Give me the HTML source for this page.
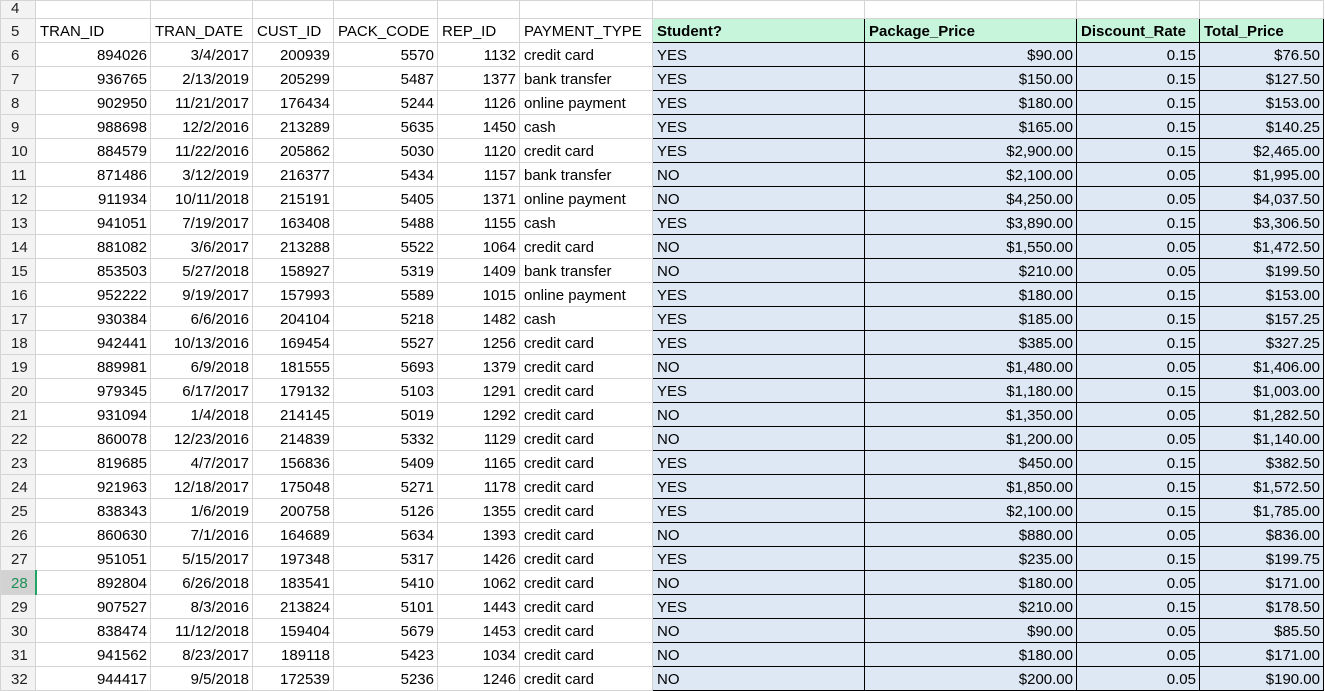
<!DOCTYPE html>
<html><head><meta charset="utf-8"><style>
body{margin:0;background:#fff;font-family:"Liberation Sans",Arial,sans-serif;font-size:15px;color:#000;overflow:hidden}
table{border-collapse:collapse;table-layout:fixed;width:1323px}
td{border:1px solid #d4d4d4;padding:0 3px 1px 4px;height:22px;box-sizing:content-box;vertical-align:bottom;white-space:nowrap;overflow:hidden;line-height:18px}
tr{height:24px}
td.h{background:#f3f3f3;color:#222;text-align:left;padding-left:10px}
td.s{background:#d2d2d2;color:#1e8f54;border-right:2px solid #21a366}
tr.r4{height:18px}
tr.r4 td{height:16px;line-height:16px}
td.r{text-align:right}
td.g{background:#c6f5dc;font-weight:bold;border:1px solid #000}
td.b{background:#dde8f4;border:1px solid #000}
</style></head><body>
<table>
<colgroup><col style="width:35px"><col style="width:115px"><col style="width:102px"><col style="width:81px"><col style="width:104px"><col style="width:82px"><col style="width:133px"><col style="width:212px"><col style="width:212px"><col style="width:123px"><col style="width:124px"></colgroup>
<tr class="r4"><td class="h">4</td><td></td><td></td><td></td><td></td><td></td><td></td><td></td><td></td><td></td><td></td></tr>
<tr><td class="h">5</td><td>TRAN_ID</td><td>TRAN_DATE</td><td>CUST_ID</td><td>PACK_CODE</td><td>REP_ID</td><td>PAYMENT_TYPE</td><td class="g">Student?</td><td class="g">Package_Price</td><td class="g">Discount_Rate</td><td class="g">Total_Price</td></tr>
<tr><td class="h">6</td><td class="r">894026</td><td class="r">3/4/2017</td><td class="r">200939</td><td class="r">5570</td><td class="r">1132</td><td>credit card</td><td class="b">YES</td><td class="b r">$90.00</td><td class="b r">0.15</td><td class="b r">$76.50</td></tr>
<tr><td class="h">7</td><td class="r">936765</td><td class="r">2/13/2019</td><td class="r">205299</td><td class="r">5487</td><td class="r">1377</td><td>bank transfer</td><td class="b">YES</td><td class="b r">$150.00</td><td class="b r">0.15</td><td class="b r">$127.50</td></tr>
<tr><td class="h">8</td><td class="r">902950</td><td class="r">11/21/2017</td><td class="r">176434</td><td class="r">5244</td><td class="r">1126</td><td>online payment</td><td class="b">YES</td><td class="b r">$180.00</td><td class="b r">0.15</td><td class="b r">$153.00</td></tr>
<tr><td class="h">9</td><td class="r">988698</td><td class="r">12/2/2016</td><td class="r">213289</td><td class="r">5635</td><td class="r">1450</td><td>cash</td><td class="b">YES</td><td class="b r">$165.00</td><td class="b r">0.15</td><td class="b r">$140.25</td></tr>
<tr><td class="h">10</td><td class="r">884579</td><td class="r">11/22/2016</td><td class="r">205862</td><td class="r">5030</td><td class="r">1120</td><td>credit card</td><td class="b">YES</td><td class="b r">$2,900.00</td><td class="b r">0.15</td><td class="b r">$2,465.00</td></tr>
<tr><td class="h">11</td><td class="r">871486</td><td class="r">3/12/2019</td><td class="r">216377</td><td class="r">5434</td><td class="r">1157</td><td>bank transfer</td><td class="b">NO</td><td class="b r">$2,100.00</td><td class="b r">0.05</td><td class="b r">$1,995.00</td></tr>
<tr><td class="h">12</td><td class="r">911934</td><td class="r">10/11/2018</td><td class="r">215191</td><td class="r">5405</td><td class="r">1371</td><td>online payment</td><td class="b">NO</td><td class="b r">$4,250.00</td><td class="b r">0.05</td><td class="b r">$4,037.50</td></tr>
<tr><td class="h">13</td><td class="r">941051</td><td class="r">7/19/2017</td><td class="r">163408</td><td class="r">5488</td><td class="r">1155</td><td>cash</td><td class="b">YES</td><td class="b r">$3,890.00</td><td class="b r">0.15</td><td class="b r">$3,306.50</td></tr>
<tr><td class="h">14</td><td class="r">881082</td><td class="r">3/6/2017</td><td class="r">213288</td><td class="r">5522</td><td class="r">1064</td><td>credit card</td><td class="b">NO</td><td class="b r">$1,550.00</td><td class="b r">0.05</td><td class="b r">$1,472.50</td></tr>
<tr><td class="h">15</td><td class="r">853503</td><td class="r">5/27/2018</td><td class="r">158927</td><td class="r">5319</td><td class="r">1409</td><td>bank transfer</td><td class="b">NO</td><td class="b r">$210.00</td><td class="b r">0.05</td><td class="b r">$199.50</td></tr>
<tr><td class="h">16</td><td class="r">952222</td><td class="r">9/19/2017</td><td class="r">157993</td><td class="r">5589</td><td class="r">1015</td><td>online payment</td><td class="b">YES</td><td class="b r">$180.00</td><td class="b r">0.15</td><td class="b r">$153.00</td></tr>
<tr><td class="h">17</td><td class="r">930384</td><td class="r">6/6/2016</td><td class="r">204104</td><td class="r">5218</td><td class="r">1482</td><td>cash</td><td class="b">YES</td><td class="b r">$185.00</td><td class="b r">0.15</td><td class="b r">$157.25</td></tr>
<tr><td class="h">18</td><td class="r">942441</td><td class="r">10/13/2016</td><td class="r">169454</td><td class="r">5527</td><td class="r">1256</td><td>credit card</td><td class="b">YES</td><td class="b r">$385.00</td><td class="b r">0.15</td><td class="b r">$327.25</td></tr>
<tr><td class="h">19</td><td class="r">889981</td><td class="r">6/9/2018</td><td class="r">181555</td><td class="r">5693</td><td class="r">1379</td><td>credit card</td><td class="b">NO</td><td class="b r">$1,480.00</td><td class="b r">0.05</td><td class="b r">$1,406.00</td></tr>
<tr><td class="h">20</td><td class="r">979345</td><td class="r">6/17/2017</td><td class="r">179132</td><td class="r">5103</td><td class="r">1291</td><td>credit card</td><td class="b">YES</td><td class="b r">$1,180.00</td><td class="b r">0.15</td><td class="b r">$1,003.00</td></tr>
<tr><td class="h">21</td><td class="r">931094</td><td class="r">1/4/2018</td><td class="r">214145</td><td class="r">5019</td><td class="r">1292</td><td>credit card</td><td class="b">NO</td><td class="b r">$1,350.00</td><td class="b r">0.05</td><td class="b r">$1,282.50</td></tr>
<tr><td class="h">22</td><td class="r">860078</td><td class="r">12/23/2016</td><td class="r">214839</td><td class="r">5332</td><td class="r">1129</td><td>credit card</td><td class="b">NO</td><td class="b r">$1,200.00</td><td class="b r">0.05</td><td class="b r">$1,140.00</td></tr>
<tr><td class="h">23</td><td class="r">819685</td><td class="r">4/7/2017</td><td class="r">156836</td><td class="r">5409</td><td class="r">1165</td><td>credit card</td><td class="b">YES</td><td class="b r">$450.00</td><td class="b r">0.15</td><td class="b r">$382.50</td></tr>
<tr><td class="h">24</td><td class="r">921963</td><td class="r">12/18/2017</td><td class="r">175048</td><td class="r">5271</td><td class="r">1178</td><td>credit card</td><td class="b">YES</td><td class="b r">$1,850.00</td><td class="b r">0.15</td><td class="b r">$1,572.50</td></tr>
<tr><td class="h">25</td><td class="r">838343</td><td class="r">1/6/2019</td><td class="r">200758</td><td class="r">5126</td><td class="r">1355</td><td>credit card</td><td class="b">YES</td><td class="b r">$2,100.00</td><td class="b r">0.15</td><td class="b r">$1,785.00</td></tr>
<tr><td class="h">26</td><td class="r">860630</td><td class="r">7/1/2016</td><td class="r">164689</td><td class="r">5634</td><td class="r">1393</td><td>credit card</td><td class="b">NO</td><td class="b r">$880.00</td><td class="b r">0.05</td><td class="b r">$836.00</td></tr>
<tr><td class="h">27</td><td class="r">951051</td><td class="r">5/15/2017</td><td class="r">197348</td><td class="r">5317</td><td class="r">1426</td><td>credit card</td><td class="b">YES</td><td class="b r">$235.00</td><td class="b r">0.15</td><td class="b r">$199.75</td></tr>
<tr><td class="h s">28</td><td class="r">892804</td><td class="r">6/26/2018</td><td class="r">183541</td><td class="r">5410</td><td class="r">1062</td><td>credit card</td><td class="b">NO</td><td class="b r">$180.00</td><td class="b r">0.05</td><td class="b r">$171.00</td></tr>
<tr><td class="h">29</td><td class="r">907527</td><td class="r">8/3/2016</td><td class="r">213824</td><td class="r">5101</td><td class="r">1443</td><td>credit card</td><td class="b">YES</td><td class="b r">$210.00</td><td class="b r">0.15</td><td class="b r">$178.50</td></tr>
<tr><td class="h">30</td><td class="r">838474</td><td class="r">11/12/2018</td><td class="r">159404</td><td class="r">5679</td><td class="r">1453</td><td>credit card</td><td class="b">NO</td><td class="b r">$90.00</td><td class="b r">0.05</td><td class="b r">$85.50</td></tr>
<tr><td class="h">31</td><td class="r">941562</td><td class="r">8/23/2017</td><td class="r">189118</td><td class="r">5423</td><td class="r">1034</td><td>credit card</td><td class="b">NO</td><td class="b r">$180.00</td><td class="b r">0.05</td><td class="b r">$171.00</td></tr>
<tr><td class="h">32</td><td class="r">944417</td><td class="r">9/5/2018</td><td class="r">172539</td><td class="r">5236</td><td class="r">1246</td><td>credit card</td><td class="b">NO</td><td class="b r">$200.00</td><td class="b r">0.05</td><td class="b r">$190.00</td></tr>
</table>
</body></html>
